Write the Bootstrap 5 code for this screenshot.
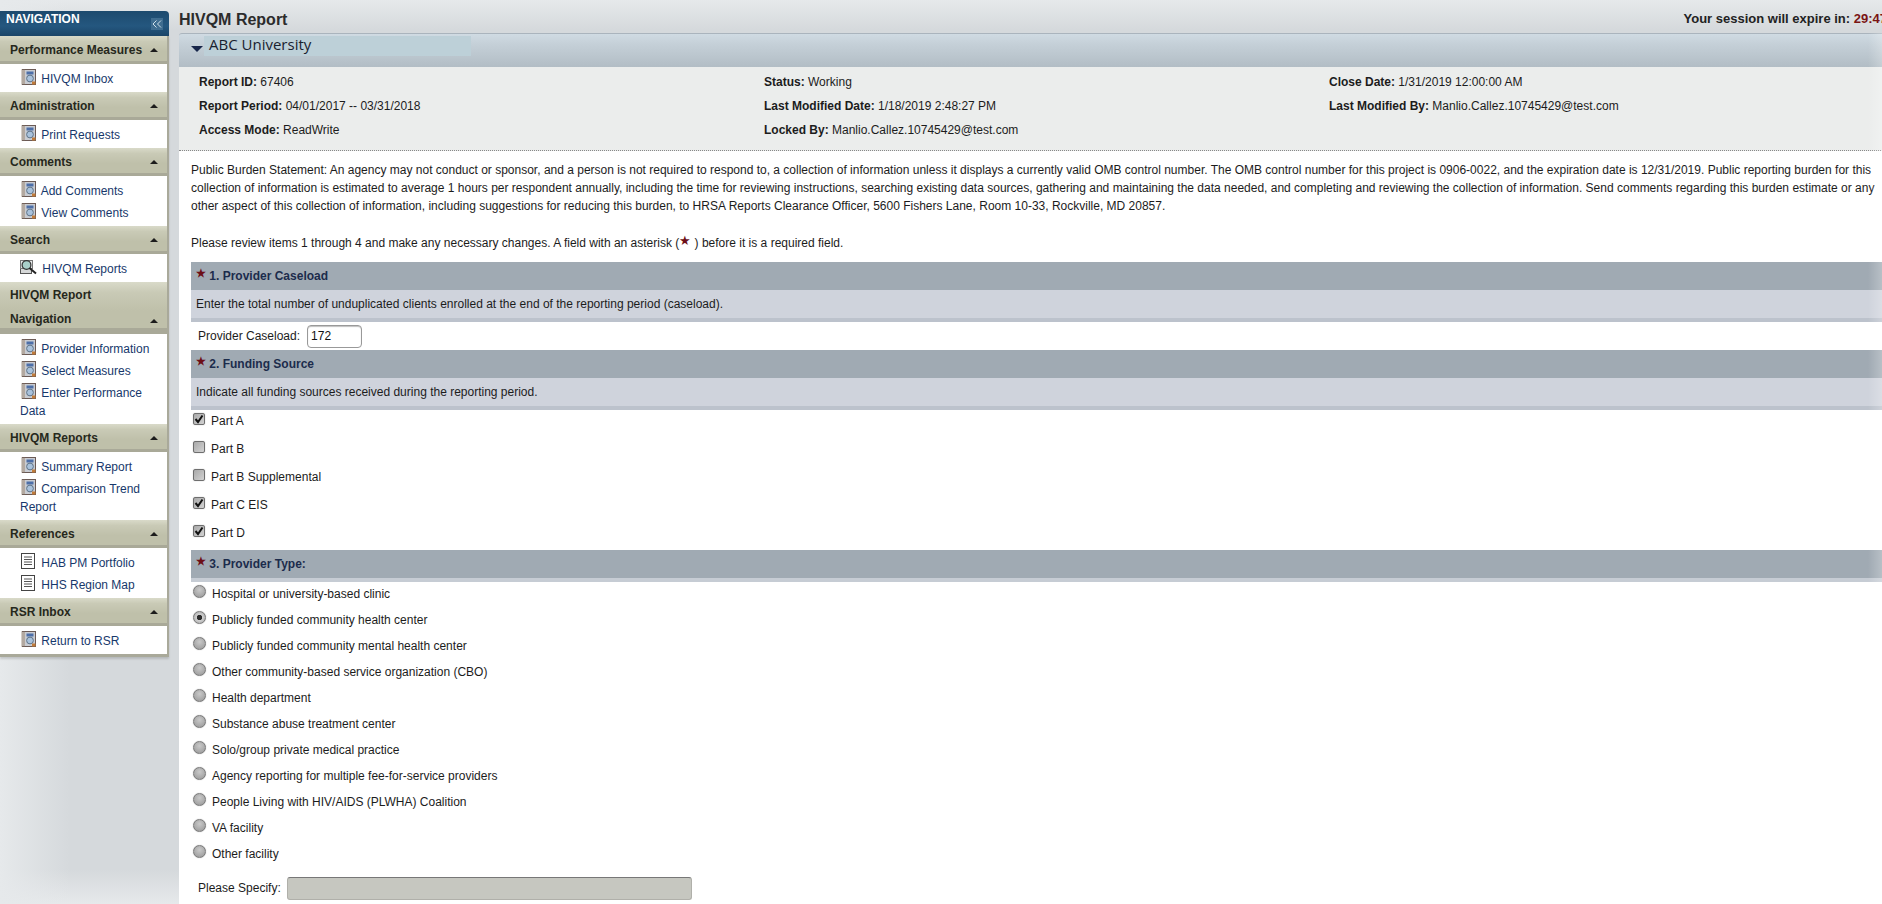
<!DOCTYPE html>
<html lang="en">
<head>
    <meta charset="UTF-8">
    <meta name="viewport" content="width=device-width, initial-scale=1.0">
    <title>HIVQM Report</title>
    <link href="https://cdn.jsdelivr.net/npm/bootstrap@5.3.0/dist/css/bootstrap.min.css" rel="stylesheet">
    <style>
        html, body { height: 904px; overflow: hidden; }
        body {
            font-family: "Liberation Sans", Arial, sans-serif;
            font-size: 12px;
            color: #1c1c1c;
            background: linear-gradient(to bottom, #e6e9eb 0, #d5d9dc 30px, #d5d9dc 870px, #e6e9eb 904px);
        }
        /* sidebar */
        #sideCol { width: 169px; height: 904px; padding-top: 11px; flex: none; background: linear-gradient(to right, #e6e9eb, rgba(213,217,220,0) 70px); }
        .side-top {
            height: 25px; padding: 0 6px;
            background: linear-gradient(to bottom, #1d4a6e, #24577f 60%, #1b4568);
            border-radius: 0 4px 0 0;
            color: #fff; font-weight: 700; font-size: 12px; line-height: 16px;
        }
        .side-collapse { width: 12px; height: 12px; margin-top: 7px; background: #3f6d90; }
        .side-box { background: #fff; border-right: 2px solid #a9a99a; border-bottom: 3px solid #a9a99a; box-shadow: 0 2px 2px rgba(0,0,0,.15); }
        .side-head {
            min-height: 28px; padding: 0 9px 0 10px;
            background: linear-gradient(to bottom, #d9dac9 0, #c9cab6 20%, #bfc0aa 55%, #bfc0aa 88%, #a9a998 88%, #a9a998 100%);
            font-weight: 700; color: #26281c; font-size: 12px; line-height: 24px;
        }
        .side-head-tall { padding-top: 1px; padding-bottom: 3px; }
        .side-arrow { width: 0; height: 0; border-left: 4px solid transparent; border-right: 4px solid transparent; border-bottom: 4px solid #1c1c1c; }
        .side-list { padding: 4px 0 2px; }
        .side-item { display: block; padding: 2px 0 2px 20px; color: #17386b; text-decoration: none; line-height: 18px; }
        .side-item svg { vertical-align: -2px; margin: -4px 2px 0 1px; }
        .side-item svg.ico-find { margin-left: 0; }
        /* main */
        #mainCol { width: 1714px; margin-left: 10px; flex: none; }
        .page-title { height: 33px; padding-top: 9px; }
        .page-title h1 { font-size: 16px; font-weight: 700; color: #2c2c2c; margin: 0; line-height: 22px; }
        .session-txt { font-weight: 700; font-size: 13px; color: #222; margin-right: 6px; white-space: nowrap; line-height: 20px; }
        .session-txt span { color: #7a1414; }
        .org-head {
            height: 34px;
            background: linear-gradient(to bottom, #d0dbe3 0, #c5d0d8 30%, #b2bdc5 100%);
            border-top: 1px solid #aab4bd;
            border-radius: 3px 0 0 0;
            position: relative;
        }
        .org-name {
            width: 267px; height: 20px; margin-top: 2px; margin-left: 25px;
            background: #bdd0d8;
            font-family: "Open Sans", "Liberation Sans", sans-serif; font-size: 15px; line-height: 16px; color: #1a2230;
            padding-left: 5px;
        }
        .org-caret { position: absolute; left: 12px; top: 12px; width: 0; height: 0; border-left: 6px solid transparent; border-right: 6px solid transparent; border-top: 6px solid #17264a; }
        .info-panel { background: #ebedec; height: 84px; border-bottom: 1px dotted #888; padding: 3px 0 0 20px; }
        .info-col { width: 565px; flex: none; }
        .info-col div { height: 24px; line-height: 24px; }
        .content-pane { background: #fff; padding: 10px 0 0 12px; height: 760px; position: relative; }
        .burden { width: 1687px; line-height: 18px; margin: 0 0 19px 0; }
        .burden-last { margin-bottom: 10px; }
        .sect-bar { height: 28px; background: #a0aab3; font-weight: 700; color: #1c2c4c; line-height: 28px; padding-left: 5px; font-size: 12px; }
        .sect-bar .star { font-size: 11px; vertical-align: 3px; }
        .star { color: #6d0f17; font-size: 13px; line-height: 10px; vertical-align: 2px; }
        .sect-note { height: 32px; background: #cfd3dc; border-bottom: 4px solid #bcc2cc; line-height: 28px; padding-left: 5px; }
        .no-note { height: 4px; background: #c6ccd4; }
        .case-row { height: 28px; padding-left: 7px; }
        .case-input {
            width: 55px; height: 23px; margin-left: 7px; padding: 2px 3px; font-size: 12px; border: 1px solid #999; border-radius: 4px; color: #111;
            box-shadow: inset 0 1px 1px rgba(0,0,0,.25);
        }
        .check-row { height: 28px; padding: 2px 0 0 2px; line-height: 18px; }
        .fake-check { width: 12px; height: 12px; border: 1px solid #6e6e6e; border-radius: 2px; background: linear-gradient(135deg, #a9a9a9, #d2d2d2); box-shadow: 0 0 1px #999; margin: 1px 6px 0 0; flex: none; }
        .fake-check svg { display: block; }
        .radio-row { height: 26px; padding: 3px 0 0 2px; line-height: 18px; }
        .fake-radio { width: 13px; height: 13px; border-radius: 50%; border: 1px solid #7a7a7a; background: radial-gradient(circle at 50% 35%, #c9c9c9, #969696); box-shadow: 0 0 1px #999; margin: 0 6px 0 0; flex: none; }
        .fake-radio.on { background: radial-gradient(circle, #2c2c2c 0, #2c2c2c 32%, #cfcfcf 38%, #a6a6a6 100%); }
        .specify-row { padding-left: 7px; height: 28px; margin-top: 6px; }
        .specify-box { width: 405px; height: 23px; margin-left: 6px; background: #c6c7c0; border: 1px solid #b0b0aa; border-top-color: #777; border-radius: 3px; }
        .edge-fade { position: absolute; top: 33px; left: 1868px; width: 14px; height: 871px; background: linear-gradient(to right, rgba(255,255,255,0), rgba(255,255,255,.25)); pointer-events: none; }
    </style>
</head>
<body>

<svg width="0" height="0" class="position-absolute">
    <symbol id="icoBook" viewBox="0 0 15 16">
        <rect x="1.5" y="0.5" width="13" height="15" fill="#c9ccd2" stroke="#6b5a55"/>
        <rect x="0.5" y="0.5" width="3.5" height="15" fill="#7a6a60"/>
        <path d="M0 2h4M0 4h4M0 6h4M0 8h4M0 10h4M0 12h4M0 14h4" stroke="#ece8e0"/>
        <rect x="5.5" y="2.5" width="7" height="3" fill="#4d6fa8"/>
        <circle cx="9" cy="9.5" r="3.4" fill="#a9c2dc" stroke="#5f7488"/>
        <rect x="11" y="12.5" width="3.5" height="3" fill="#c07b3a"/>
    </symbol>
    <symbol id="icoFind" viewBox="0 0 17 15">
        <rect x="0.5" y="8.5" width="11" height="5" fill="#d6d8d8" stroke="#555"/>
        <rect x="0.5" y="0.5" width="12" height="8" fill="#e8eaea" stroke="#777"/>
        <circle cx="6.5" cy="5" r="4.4" fill="#a9cfc9" stroke="#333" stroke-width="1.2"/>
        <path d="M9.5 8l6.5 5.5" stroke="#222" stroke-width="2"/>
    </symbol>
    <symbol id="icoDoc" viewBox="0 0 15 16">
        <rect x="0.5" y="0.5" width="13" height="15" fill="#fff" stroke="#444"/>
        <path d="M3 4h8M3 6.5h8M3 9h8M3 11.5h8" stroke="#555"/>
    </symbol>
</svg>

<div class="d-flex">
    <!-- menu lateral -->
    <div id="sideCol">
        <div class="side-top d-flex justify-content-between">
            <span>NAVIGATION</span>
            <span class="side-collapse d-flex align-items-center justify-content-center">
                <svg width="10" height="8" viewBox="0 0 10 8"><path d="M4.5 0.5L1 4l3.5 3.5M9 0.5L5.5 4 9 7.5" fill="none" stroke="#cfe0ea"/></svg>
            </span>
        </div>
        <div class="side-box">
            <div class="side-head d-flex justify-content-between align-items-center"><span>Performance Measures</span><span class="side-arrow"></span></div>
            <div class="side-list"><a class="side-item" href="#"><svg width="15" height="16"><use href="#icoBook"/></svg> HIVQM Inbox</a></div>

            <div class="side-head d-flex justify-content-between align-items-center"><span>Administration</span><span class="side-arrow"></span></div>
            <div class="side-list"><a class="side-item" href="#"><svg width="15" height="16"><use href="#icoBook"/></svg> Print Requests</a></div>

            <div class="side-head d-flex justify-content-between align-items-center"><span>Comments</span><span class="side-arrow"></span></div>
            <div class="side-list">
                <a class="side-item" href="#"><svg width="15" height="16"><use href="#icoBook"/></svg> Add Comments</a>
                <a class="side-item" href="#"><svg width="15" height="16"><use href="#icoBook"/></svg> View Comments</a>
            </div>

            <div class="side-head d-flex justify-content-between align-items-center"><span>Search</span><span class="side-arrow"></span></div>
            <div class="side-list"><a class="side-item" href="#"><svg class="ico-find" width="17" height="15"><use href="#icoFind"/></svg> HIVQM Reports</a></div>

            <div class="side-head side-head-tall d-flex justify-content-between align-items-end"><span>HIVQM Report<br>Navigation</span><span class="side-arrow mb-2"></span></div>
            <div class="side-list">
                <a class="side-item" href="#"><svg width="15" height="16"><use href="#icoBook"/></svg> Provider Information</a>
                <a class="side-item" href="#"><svg width="15" height="16"><use href="#icoBook"/></svg> Select Measures</a>
                <a class="side-item" href="#"><svg width="15" height="16"><use href="#icoBook"/></svg> Enter Performance Data</a>
            </div>

            <div class="side-head d-flex justify-content-between align-items-center"><span>HIVQM Reports</span><span class="side-arrow"></span></div>
            <div class="side-list">
                <a class="side-item" href="#"><svg width="15" height="16"><use href="#icoBook"/></svg> Summary Report</a>
                <a class="side-item" href="#"><svg width="15" height="16"><use href="#icoBook"/></svg> Comparison Trend Report</a>
            </div>

            <div class="side-head d-flex justify-content-between align-items-center"><span>References</span><span class="side-arrow"></span></div>
            <div class="side-list">
                <a class="side-item" href="#"><svg width="15" height="16"><use href="#icoDoc"/></svg> HAB PM Portfolio</a>
                <a class="side-item" href="#"><svg width="15" height="16"><use href="#icoDoc"/></svg> HHS Region Map</a>
            </div>

            <div class="side-head d-flex justify-content-between align-items-center"><span>RSR Inbox</span><span class="side-arrow"></span></div>
            <div class="side-list"><a class="side-item" href="#"><svg width="15" height="16"><use href="#icoBook"/></svg> Return to RSR</a></div>
        </div>
    </div>

    <!-- conteudo -->
    <div id="mainCol">
        <div class="page-title d-flex justify-content-between">
            <h1>HIVQM Report</h1>
            <div class="session-txt">Your session will expire in: <span>29:47</span></div>
        </div>
        <div class="org-head">
            <span class="org-caret"></span>
            <div class="org-name">ABC University</div>
        </div>
        <div class="info-panel d-flex">
            <div class="info-col">
                <div><b>Report ID:</b> 67406</div>
                <div><b>Report Period:</b> 04/01/2017 -- 03/31/2018</div>
                <div><b>Access Mode:</b> ReadWrite</div>
            </div>
            <div class="info-col">
                <div><b>Status:</b> Working</div>
                <div><b>Last Modified Date:</b> 1/18/2019 2:48:27 PM</div>
                <div><b>Locked By:</b> Manlio.Callez.10745429@test.com</div>
            </div>
            <div class="info-col">
                <div><b>Close Date:</b> 1/31/2019 12:00:00 AM</div>
                <div><b>Last Modified By:</b> Manlio.Callez.10745429@test.com</div>
            </div>
        </div>
        <div class="content-pane">
            <p class="burden">Public Burden Statement: An agency may not conduct or sponsor, and a person is not required to respond to, a collection of information unless it displays a currently valid OMB control number. The OMB control number for this project is 0906-0022, and the expiration date is 12/31/2019. Public reporting burden for this collection of information is estimated to average 1 hours per respondent annually, including the time for reviewing instructions, searching existing data sources, gathering and maintaining the data needed, and completing and reviewing the collection of information. Send comments regarding this burden estimate or any other aspect of this collection of information, including suggestions for reducing this burden, to HRSA Reports Clearance Officer, 5600 Fishers Lane, Room 10-33, Rockville, MD 20857.</p>
            <p class="burden burden-last">Please review items 1 through 4 and make any necessary changes. A field with an asterisk (<span class="star">★</span> ) before it is a required field.</p>

            <div class="sect-bar"><span class="star">★</span> 1. Provider Caseload</div>
            <div class="sect-note">Enter the total number of unduplicated clients enrolled at the end of the reporting period (caseload).</div>
            <div class="case-row d-flex align-items-center">
                <label>Provider Caseload:</label>
                <input class="case-input" type="text" value="172">
            </div>

            <div class="sect-bar"><span class="star">★</span> 2. Funding Source</div>
            <div class="sect-note">Indicate all funding sources received during the reporting period.</div>
            <div>
                <div class="check-row d-flex"><span class="fake-check"><svg width="10" height="10" viewBox="0 0 10 10"><path d="M1.5 5l2.5 3L8.5 1.5" fill="none" stroke="#111" stroke-width="2"/></svg></span>Part A</div>
                <div class="check-row d-flex"><span class="fake-check"></span>Part B</div>
                <div class="check-row d-flex"><span class="fake-check"></span>Part B Supplemental</div>
                <div class="check-row d-flex"><span class="fake-check"><svg width="10" height="10" viewBox="0 0 10 10"><path d="M1.5 5l2.5 3L8.5 1.5" fill="none" stroke="#111" stroke-width="2"/></svg></span>Part C EIS</div>
                <div class="check-row d-flex"><span class="fake-check"><svg width="10" height="10" viewBox="0 0 10 10"><path d="M1.5 5l2.5 3L8.5 1.5" fill="none" stroke="#111" stroke-width="2"/></svg></span>Part D</div>
            </div>

            <div class="sect-bar"><span class="star">★</span> 3. Provider Type:</div>
            <div class="no-note"></div>
            <div id="radioList"></div>
            <div class="specify-row d-flex align-items-center">
                <label>Please Specify:</label>
                <div class="specify-box"></div>
            </div>
        </div>
    </div>
</div>
<div class="edge-fade"></div>

<script>
    const tipos = ["Hospital or university-based clinic", "Publicly funded community health center", "Publicly funded community mental health center", "Other community-based service organization (CBO)", "Health department", "Substance abuse treatment center", "Solo/group private medical practice", "Agency reporting for multiple fee-for-service providers", "People Living with HIV/AIDS (PLWHA) Coalition", "VA facility", "Other facility"];
    const lista = document.getElementById("radioList");
    tipos.forEach((t, i) => {
        const row = document.createElement("div");
        row.className = "radio-row d-flex";
        row.innerHTML = '<span class="fake-radio' + (i === 1 ? ' on' : '') + '"></span>' + t;
        lista.appendChild(row);
    });
</script>
<script src="https://cdn.jsdelivr.net/npm/bootstrap@5.3.0/dist/js/bootstrap.bundle.min.js"></script>
</body>
</html>
